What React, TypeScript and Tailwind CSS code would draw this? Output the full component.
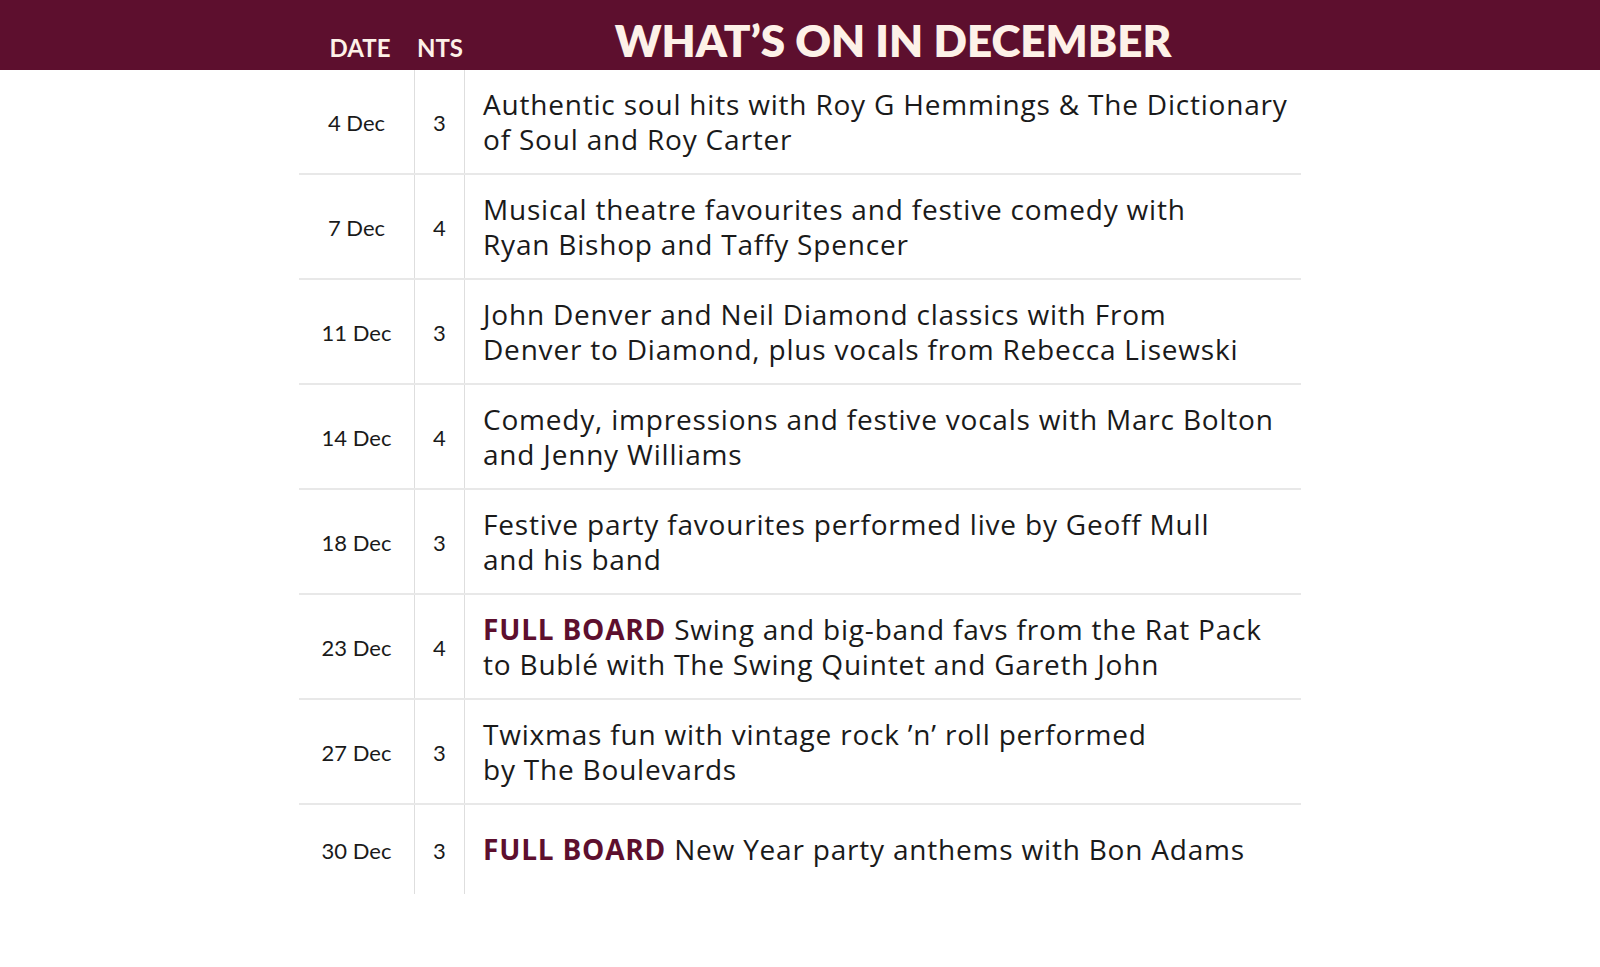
import React from "react";

// ------------------------------------------------
// DATA
// ------------------------------------------------

type Row = { date: string; nights: number; fullBoard?: boolean; lines: [string, string?] };

const rows: Row[] = [
  { date: "4 Dec", nights: 3, lines: ["Authentic soul hits with Roy G Hemmings & The Dictionary", "of Soul and Roy Carter"] },
  { date: "7 Dec", nights: 4, lines: ["Musical theatre favourites and festive comedy with", "Ryan Bishop and Taffy Spencer"] },
  { date: "11 Dec", nights: 3, lines: ["John Denver and Neil Diamond classics with From", "Denver to Diamond, plus vocals from Rebecca Lisewski"] },
  { date: "14 Dec", nights: 4, lines: ["Comedy, impressions and festive vocals with Marc Bolton", "and Jenny Williams"] },
  { date: "18 Dec", nights: 3, lines: ["Festive party favourites performed live by Geoff Mull", "and his band"] },
  { date: "23 Dec", nights: 4, fullBoard: true, lines: ["Swing and big-band favs from the Rat Pack", "to Bublé with The Swing Quintet and Gareth John"] },
  { date: "27 Dec", nights: 3, lines: ["Twixmas fun with vintage rock \u2019n\u2019 roll performed", "by The Boulevards"] },
  { date: "30 Dec", nights: 3, fullBoard: true, lines: ["New Year party anthems with Bon Adams"] },
];

const lato = { fontFamily: "Lato, 'Noto Sans', sans-serif" };
const body = { fontFamily: "'Open Sans', 'Noto Sans', sans-serif" };

// ------------------------------------------------
// APP
// ------------------------------------------------

export default function App() {
  return (
    <div className="w-[1600px] h-[967px] bg-white text-[#1a1a1a]" style={lato}>
      {/* ---- HEADER ---- */}
      <div className="h-[70px] bg-[#5d0f2e] text-[#fdf1e8]">
        <div className="ml-[299px] w-[1002px] h-full grid grid-cols-[116px_50px_1fr] items-end pb-[8px]">
          <div className="text-center text-[24px] font-bold leading-none pb-[2px] pl-[6px]">DATE</div>
          <div className="text-center text-[24px] font-bold leading-none pb-[2px]">NTS</div>
          <div className="text-center text-[44px] font-extrabold leading-none pl-[20px]">WHAT&rsquo;S ON IN DECEMBER</div>
        </div>
      </div>

      {/* ---- TABLE ---- */}
      <div className="ml-[299px] w-[1002px]">
        {rows.map((r, i) => {
          const last = i === rows.length - 1;
          return (
            <div
              key={r.date}
              className={`grid grid-cols-[116px_50px_1fr] ${last ? "h-[89px]" : "h-[105px] border-b-2 border-[#e8e8e8]"}`}
            >
              <div className="flex items-center justify-center border-r border-[#dedede] text-[22px] pt-[2px]">{r.date}</div>
              <div className="flex items-center justify-center border-r border-[#dedede] text-[22px] pt-[2px]">{r.nights}</div>
              <div className="flex items-center pl-[18px] text-[28px] leading-[35px] tracking-[0.8px]" style={body}>
                <p>
                  {r.fullBoard && <span className="font-bold text-[#5d0f2e]">FULL BOARD </span>}
                  {r.lines[0]}
                  {r.lines[1] && (
                    <>
                      <br />
                      {r.lines[1]}
                    </>
                  )}
                </p>
              </div>
            </div>
          );
        })}
      </div>
    </div>
  );
}
